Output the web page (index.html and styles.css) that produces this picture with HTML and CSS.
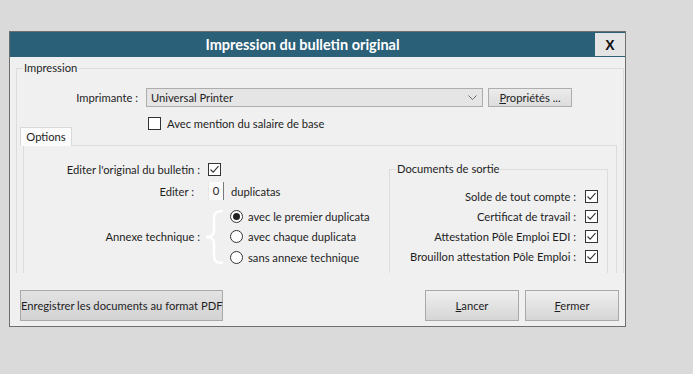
FILE: index.html
```html
<!DOCTYPE html>
<html lang="fr">
<head>
    <meta charset="UTF-8">
    <title>Impression du bulletin original</title>
    <link rel="stylesheet" href="styles.css">
</head>
<body>
    <div class="dialog">
        <div class="titlebar">
            <div class="title">Impression du bulletin original</div>
            <button class="close">X</button>
        </div>

        <div class="content">
            <!-- Impression -->
            <fieldset class="group print">
                <legend>Impression</legend>
                <div class="printer-row">
                    <span class="printer-label">Imprimante :</span>
                    <div class="combo">
                        <span>Universal Printer</span>
                        <svg class="chevron" width="9" height="6" viewBox="0 0 9 6"><path d="M0.5 0.5 L4.5 4.5 L8.5 0.5" fill="none" stroke="#6b6b6b" stroke-width="1"/></svg>
                    </div>
                    <button class="btn props"><u>P</u>ropriétés ...</button>
                </div>
                <div class="check-row">
                    <span class="box"></span>
                    <span>Avec mention du salaire de base</span>
                </div>

                <div class="tabs">
                    <div class="tab">Options</div>
                </div>
                <div class="panel">
                    <div class="options">
                        <div class="opt-row">
                            <span class="opt-label">Editer l'original du bulletin :</span>
                            <span class="box checked"></span>
                        </div>
                        <div class="opt-row">
                            <span class="opt-label short">Editer :</span>
                            <span class="spin">0</span>
                            <span class="after">duplicatas</span>
                        </div>
                        <div class="annexe">
                            <span class="opt-label">Annexe technique :</span>
                            <svg class="brace" width="26" height="58" viewBox="0 0 26 58">
                                <path d="M23 3 C14 3 14 6 14 14 L14 22 C14 27 12 29 6 29 C12 29 14 31 14 36 L14 44 C14 52 14 55 23 55" fill="none" stroke="#ffffff" stroke-width="2.5"/>
                            </svg>
                            <div class="radios">
                                <div class="radio-row"><span class="radio on"></span>avec le premier duplicata</div>
                                <div class="radio-row"><span class="radio"></span>avec chaque duplicata</div>
                                <div class="radio-row"><span class="radio"></span>sans annexe technique</div>
                            </div>
                        </div>
                    </div>

                    <fieldset class="group docs">
                        <legend>Documents de sortie</legend>
                        <div class="doc-row">Solde de tout compte :<span class="box checked"></span></div>
                        <div class="doc-row">Certificat de travail :<span class="box checked"></span></div>
                        <div class="doc-row">Attestation Pôle Emploi EDI :<span class="box checked"></span></div>
                        <div class="doc-row">Brouillon attestation Pôle Emploi :<span class="box checked"></span></div>
                    </fieldset>
                </div>
            </fieldset>

            <div class="actions">
                <button class="btn big pdf">Enregistrer les documents au format PDF</button>
                <div class="spacer"></div>
                <button class="btn big"><u>L</u>ancer</button>
                <button class="btn big"><u>F</u>ermer</button>
            </div>
        </div>
    </div>
</body>
</html>
```

FILE: styles.css
```css
body {
    margin: 0;
    background-color: #dadada;
    font-family: Lato, "Liberation Sans", sans-serif;
    font-size: 11.2px;
    color: #1e1e1e;
}
.dialog {
    margin: 31px 0 0 9px;
    width: 615px;
    border: 1px solid #6f6f6f;
    background-color: #f0f0f0;
}
.titlebar {
    display: flex;
    height: 25px;
    background-color: #2b6079;
}
.title {
    flex: 1;
    text-align: center;
    color: white;
    font-weight: bold;
    font-size: 14.5px;
    line-height: 25px;
}
.close {
    width: 30px;
    height: 23px;
    margin: 1px 0 1px 0;
    border: none;
    background-color: #e4e4e4;
    font-family: "Liberation Sans", sans-serif;
    font-weight: bold;
    font-size: 14px;
    color: #111;
    padding: 0;
}
.content {
    padding: 0 0 5px 0;
}
.group {
    margin: 0;
    padding: 0;
    min-width: 0;
    border: 1px solid #dcdcdc;
}
.group legend {
    padding: 0 1px;
    line-height: 16px;
}
.print {
    margin: 3px 1px 0 6px;
    height: 212px;
    border-bottom: none;
    overflow: hidden;
}
.print legend {
    margin-left: 6px;
}
.printer-row {
    display: flex;
    align-items: center;
    margin-top: 12px;
    height: 19px;
}
.printer-label {
    width: 121px;
    text-align: right;
    margin-right: 8px;
}
.combo {
    width: 337px;
    height: 19px;
    box-sizing: border-box;
    border: 1px solid #adadad;
    background-color: #e5e5e5;
    display: flex;
    align-items: center;
    justify-content: space-between;
    padding: 0 4px 0 4px;
}
.chevron {
    margin-right: 1px;
}
.btn {
    font-family: inherit;
    font-size: 11.2px;
    color: #1e1e1e;
    border: 1px solid #a9a9a9;
    background: linear-gradient(#efefef, #d6d6d6);
    padding: 0;
    white-space: nowrap;
}
.props {
    margin-left: 5px;
    width: 84px;
    height: 19px;
    background: linear-gradient(#ececec, #dcdcdc);
    border-color: #adadad;
}
.box {
    display: inline-block;
    width: 13px;
    height: 13px;
    box-sizing: border-box;
    border: 1px solid #333;
    background-color: white;
    flex-shrink: 0;
}
.box.checked {
    background: white url("data:image/svg+xml;utf8,<svg xmlns='http://www.w3.org/2000/svg' width='11' height='11'><path d='M1.5 5.5 L4.2 8.2 L9.5 2.2' fill='none' stroke='%23333' stroke-width='1.1'/></svg>") no-repeat center;
}
.check-row {
    display: flex;
    align-items: center;
    gap: 6px;
    margin: 10px 0 0 131px;
    height: 13px;
}
.tabs {
    display: flex;
    margin: -3px 0 0 3px;
}
.tab {
    position: relative;
    width: 52px;
    height: 19px;
    box-sizing: border-box;
    border: 1px solid #d9d9d9;
    border-bottom: none;
    background-color: #fbfbfb;
    text-align: center;
    line-height: 18px;
    margin-bottom: -1px;
}
.panel {
    display: flex;
    margin: 0 6px 0 6px;
    border: 1px solid #dcdcdc;
    border-bottom: none;
    height: 140px;
}
.options {
    padding-top: 13px;
}
.opt-row {
    display: flex;
    align-items: center;
    height: 20px;
}
.opt-row + .opt-row {
    height: 22px;
    margin-top: 1px;
}
.opt-label {
    width: 176px;
    text-align: right;
    margin-right: 8px;
    flex-shrink: 0;
}
.opt-label.short {
    width: 170px;
    margin-right: 14px;
}
.spin {
    width: 16px;
    height: 18px;
    box-sizing: border-box;
    border-left: 1px solid #e6e6e6;
    border-right: 1px solid #7a7a7a;
    background-color: #fbfbfb;
    text-align: center;
    line-height: 18px;
}
.after {
    margin-left: 7px;
}
.annexe {
    display: flex;
    align-items: center;
    margin-top: 4px;
}
.annexe .opt-label {
    margin-right: 0;
}
.brace {
    margin-right: 4px;
}
.radio-row {
    display: flex;
    align-items: center;
    gap: 5px;
    height: 20.5px;
}
.radio {
    width: 13px;
    height: 13px;
    box-sizing: border-box;
    border: 1px solid #333;
    border-radius: 50%;
    background-color: white;
    display: flex;
    align-items: center;
    justify-content: center;
}
.radio.on::after {
    content: "";
    width: 7px;
    height: 7px;
    border-radius: 50%;
    background-color: #222;
}
.docs {
    margin: 15px 8px 0 auto;
    width: 219px;
    height: 130px;
    padding: 9px 9px 0 0;
    box-sizing: border-box;
    border-bottom: none;
}
.docs legend {
    margin-left: 6px;
}
.doc-row {
    display: flex;
    align-items: center;
    justify-content: flex-end;
    gap: 9px;
    height: 20px;
}
.actions {
    display: flex;
    align-items: center;
    margin-top: 17px;
    padding: 0 6px 0 10px;
}
.spacer {
    flex: 1;
}
.big {
    height: 31px;
    width: 94px;
}
.big + .big {
    margin-left: 6px;
}
.pdf {
    width: 203px;
    background: linear-gradient(#e2e2e2, #d3d3d3);
}
```
